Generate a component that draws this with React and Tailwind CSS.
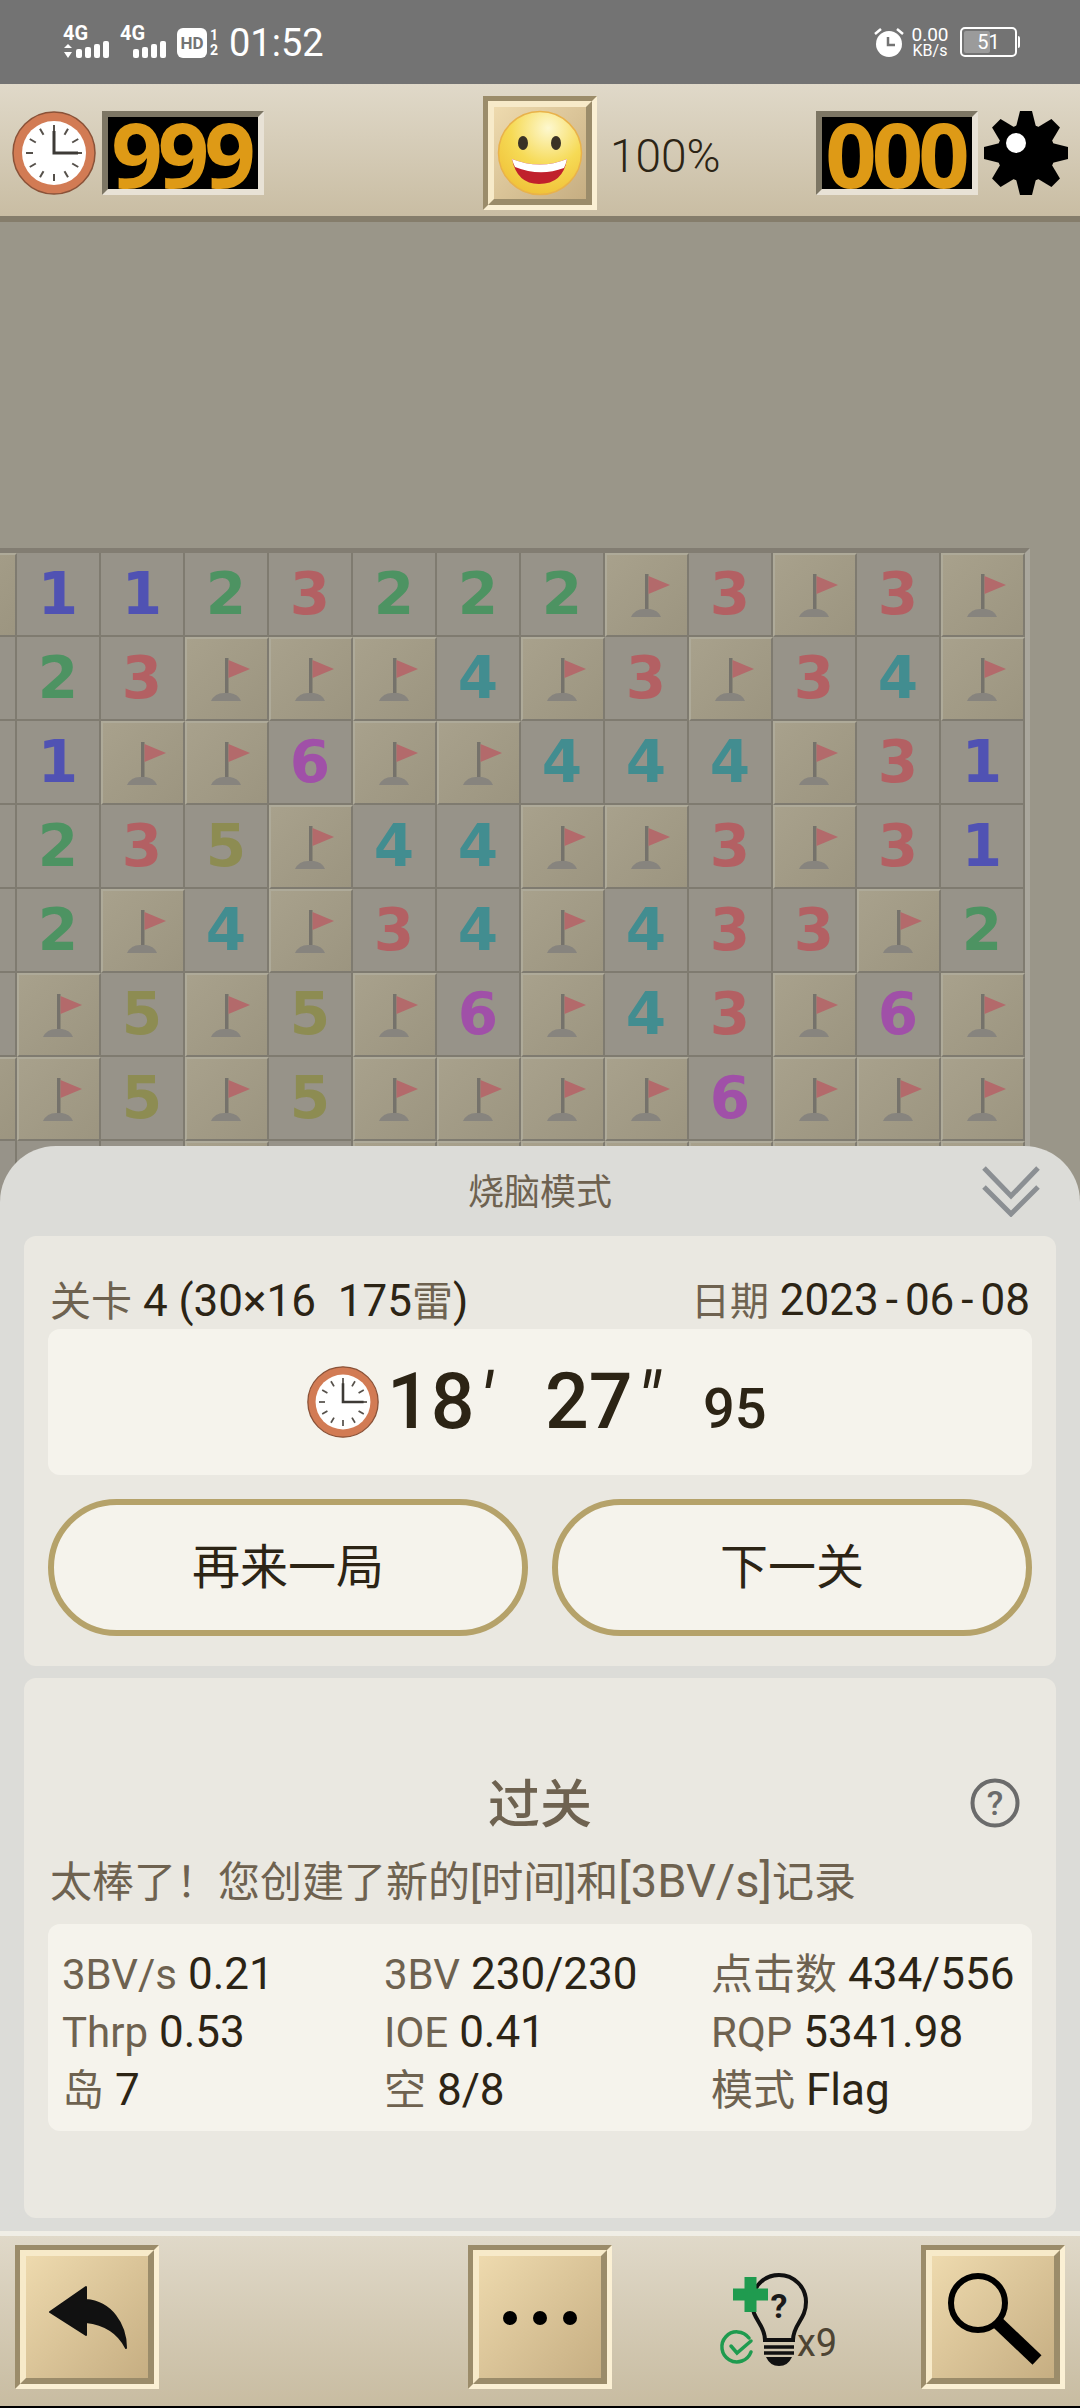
const board = [
  "F1123222F3F3F",
  ".23FFF4F3F34F",
  ".1FF6FF444F31",
  ".235F44FF3F31",
  ".2F4F34F433F2",
  ".F5F5F6F43F6F",
  "FF5F5FFFF6FFF",
  "...F.FFFFFFFF",
];

const digitColors = {
  1: "text-[#5052b3]",
  2: "text-[#4d9362]",
  3: "text-[#b36063]",
  4: "text-[#428d90]",
  5: "text-[#8d8c52]",
  6: "text-[#a050a8]",
};

const stats = [
  ["3BV/s", "0.21"],
  ["3BV", "230/230"],
  ["点击数", "434/556"],
  ["Thrp", "0.53"],
  ["IOE", "0.41"],
  ["RQP", "5341.98"],
  ["岛", "7"],
  ["空", "8/8"],
  ["模式", "Flag"],
];

function Signal({ arrows }) {
  const bars = [
    [13, 8, 9],
    [22, 6, 11],
    [31, 3, 14],
    [40, 0, 17],
  ];
  return (
    <div className="w-[48px] shrink-0 flex flex-col">
      <span className="h-[15px] text-[20px] leading-[15px] font-bold">4G</span>
      <svg width="48" height="17" viewBox="0 0 48 17">
        {arrows && <path d="M1 7 L5 3 L9 7 Z M1 11 L9 11 L5 17 Z" fill="#fff" />}
        {bars.map(([bx, by, h]) => (
          <rect key={bx} x={bx} y={by} width="6" height={h} rx="2" fill="#fff" />
        ))}
      </svg>
    </div>
  );
}

function Clock({ size }) {
  const ticks = [0, 30, 60, 90, 120, 150, 180, 210, 240, 270, 300, 330];
  return (
    <svg width={size} height={size} viewBox="0 0 84 84" className="shrink-0">
      <circle cx="42" cy="42" r="41" fill="#d27b54" stroke="#8a5238" strokeWidth="1.5" />
      <circle cx="42" cy="42" r="32" fill="#fff" />
      {ticks.map((a) => (
        <line key={a} x1="42" y1="14" x2="42" y2="21" stroke="#55504a" strokeWidth="2" transform={`rotate(${a} 42 42)`} />
      ))}
      <path d="M42 20 L42 42 L66 42" fill="none" stroke="#3d3a36" strokeWidth="3" />
    </svg>
  );
}

function Counter({ value }) {
  return (
    <div className="w-[162px] h-[84px] shrink-0 border-[6px] border-t-[#7d7664] border-l-[#7d7664] border-b-[#e8e2d6] border-r-[#e8e2d6] bg-black flex items-center justify-center">
      <span className="text-[90px] leading-[72px] font-bold tracking-[-5px] text-[#de9a16] font-['Open_Sans',sans-serif] pr-[4px]">
        {value}
      </span>
    </div>
  );
}

function Bevel({ className, children }) {
  return (
    <div className={`shrink-0 border-[5px] border-t-[#9b8c6a] border-l-[#9b8c6a] border-b-[#fbf0d4] border-r-[#fbf0d4] ${className}`}>
      <div className="w-full h-full border-[6px] border-t-[#f7eac9] border-l-[#f7eac9] border-b-[#9b8c6a] border-r-[#9b8c6a] bg-linear-to-br from-[#eedaae] to-[#c6ae82] flex items-center justify-center">
        {children}
      </div>
    </div>
  );
}

function Smiley() {
  return (
    <svg width="86" height="86" viewBox="0 0 86 86">
      <defs>
        <radialGradient id="face" cx="0.6" cy="0.2" r="0.9">
          <stop offset="0" stopColor="#fdf8cf" />
          <stop offset="0.5" stopColor="#f6da55" />
          <stop offset="1" stopColor="#efbd33" />
        </radialGradient>
      </defs>
      <circle cx="43" cy="43" r="41.5" fill="url(#face)" stroke="#e9b24a" strokeWidth="1.5" />
      <ellipse cx="26" cy="33" rx="5" ry="7" fill="#3a3226" />
      <ellipse cx="59" cy="33" rx="5" ry="7" fill="#3a3226" />
      <path d="M15 49 Q43 60 70 49 Q66 74 42 74 Q20 74 15 49 Z" fill="#c0202c" />
      <path d="M15 49 Q43 60 70 49 Q69 54 67 58 Q43 67 18 57 Q16 53 15 49 Z" fill="#fff" />
    </svg>
  );
}

function Gear() {
  const teeth = [0, 45, 90, 135, 180, 225, 270, 315];
  return (
    <svg width="84" height="84" viewBox="-42 -42 84 84" className="shrink-0">
      <circle r="29" fill="#000" />
      {teeth.map((a) => (
        <polygon key={a} points="-10,-26 -6,-42 6,-42 10,-26" fill="#000" transform={`rotate(${a})`} />
      ))}
      <circle cx="-10" cy="-10" r="10" fill="#fff" />
    </svg>
  );
}

function Flag() {
  return (
    <svg width="80" height="80" viewBox="2 2 80 80" className="shrink-0">
      <rect x="40" y="21" width="3.5" height="36" fill="#75726b" />
      <path d="M43.5 23 L65 32 L43.5 41 Z" fill="#b36a6b" />
      <path d="M26 64 Q30 56 39 56 L45 56 Q53 57 56 64 Z" fill="#87847e" />
    </svg>
  );
}

function Cell({ v }) {
  if (v === "F") {
    return (
      <div className="border-2 border-r-[#7f7b70] border-b-[#7f7b70] border-t-[#aeaa99] border-l-[#aeaa99] bg-linear-to-br from-[#a8a18c] to-[#9c9580] flex items-center justify-center overflow-hidden">
        <Flag />
      </div>
    );
  }
  return (
    <div className="border-r-2 border-b-2 border-[#7f7b70] bg-[#979389] flex items-center justify-center">
      {v !== "." && (
        <span className={`font-['DejaVu_Sans',sans-serif] font-bold text-[58px] leading-none ${digitColors[v]}`}>{v}</span>
      )}
    </div>
  );
}

function Board() {
  return (
    <div className="w-max ml-[-67px] border-t-[5px] border-r-[5px] border-t-[#827d72] border-r-[#aaa79d] grid grid-cols-[repeat(13,84px)] auto-rows-[84px]">
      {board.map((row, r) => row.split("").map((v, c) => <Cell key={r + "-" + c} v={v} />))}
    </div>
  );
}

function Hint() {
  return (
    <div className="ml-[108px] mt-[27px] flex items-end h-[94px]">
      <svg width="78" height="94" viewBox="0 0 78 94" className="shrink-0 overflow-visible">
        <path d="M45 68 C45 52 32 48 32 30 A27 27 0 1 1 86 30 C86 48 73 52 73 68 Z" fill="none" stroke="#111" strokeWidth="4" />
        <text x="59" y="46" textAnchor="middle" fontSize="34" fontWeight="700" fill="#1a1a1a" fontFamily="Roboto, sans-serif">?</text>
        <path d="M44 75 H74 M44 81 H74" stroke="#111" strokeWidth="3.5" />
        <path d="M46 85 H72 Q68 94 59 94 Q50 94 46 85 Z" fill="#111" />
        <path d="M24.5 5 H36.5 V16.5 H48 V28.5 H36.5 V40 H24.5 V28.5 H13 V16.5 H24.5 Z" fill="#1f9b4f" />
        <path d="M31 80 A15 15 0 1 1 29 66" fill="none" stroke="#1f9b4f" strokeWidth="3.5" strokeLinecap="round" />
        <path d="M11 74 L17 81 L31 69" fill="none" stroke="#1f9b4f" strokeWidth="3.5" strokeLinecap="round" />
      </svg>
      <span className="text-[38px] leading-none text-[#4d4433] pb-[4px] -ml-[1px]">x9</span>
    </div>
  );
}

export default function App() {
  return (
    <div className="relative w-[1080px] h-[2408px] overflow-hidden flex flex-col font-[Roboto,'Noto_Sans_CJK_SC',sans-serif]">
      {/* status bar */}
      <div className="h-[84px] shrink-0 bg-[#737373] flex items-center pl-[63px] pr-[60px] text-white">
        <Signal arrows />
        <div className="ml-[9px]">
          <Signal />
        </div>
        <div className="ml-[9px] w-[30px] h-[30px] mt-[2px] rounded-[6px] bg-white text-[#737373] text-[17px] font-bold leading-none flex items-center justify-center">
          HD
        </div>
        <div className="ml-[1px] mt-[2px] w-[12px] text-[14px] font-bold leading-[15px] text-center">
          <div>1</div>
          <div>2</div>
        </div>
        <span className="ml-[9px] text-[38px] leading-none mt-[1px]">01:52</span>
        <div className="ml-auto flex items-center">
          <svg width="30" height="30" viewBox="0 0 30 30">
            <circle cx="15" cy="17" r="13" fill="#fff" />
            <path d="M14 10 V18 H21" fill="none" stroke="#737373" strokeWidth="2.5" />
            <path d="M1 7 L7 2 M29 7 L23 2" stroke="#fff" strokeWidth="2.5" />
          </svg>
          <div className="ml-[6px] w-[40px] flex flex-col items-center leading-none">
            <span className="text-[19px] leading-[17px]">0.00</span>
            <span className="text-[16px] leading-[15px]">KB/s</span>
          </div>
          <div className="ml-[10px] w-[57px] h-[30px] rounded-[5px] border-2 border-white p-[2px] relative">
            <div className="h-full w-[26px] bg-[#9b9b9b] rounded-[2px]" />
            <span className="absolute inset-0 flex items-center justify-center text-[20px] leading-none">51</span>
          </div>
          <div className="ml-[1px] w-[2px] h-[12px] bg-white rounded-r-sm" />
        </div>
      </div>

      {/* top bar */}
      <div className="h-[138px] shrink-0 border-b-[6px] border-[#857d6b] bg-linear-to-b from-[#e0d9c9] to-[#c9bda3] flex items-center pt-[6px] pl-[12px] pr-[12px]">
        <Clock size={84} />
        <div className="ml-[6px]">
          <Counter value="999" />
        </div>
        <Bevel className="ml-[219px] w-[114px] h-[114px]">
          <Smiley />
        </Bevel>
        <span className="ml-[13px] mt-[6px] text-[46px] leading-none text-[#2c2415] font-light">100%</span>
        <div className="ml-auto">
          <Counter value="000" />
        </div>
        <div className="ml-[6px]">
          <Gear />
        </div>
      </div>

      {/* board + result sheet */}
      <div className="relative flex-1 bg-[#9a9689] overflow-hidden pt-[326px]">
        <Board />
        <div className="absolute inset-x-0 bottom-0 h-[1085px] bg-[#dcdcd8] rounded-t-[56px] flex flex-col px-[24px]">
          <div className="h-[90px] shrink-0 relative flex items-center justify-center">
            <span className="text-[36px] leading-none text-[#6e6250] mt-[4px]">烧脑模式</span>
            <svg width="60" height="52" viewBox="0 0 60 52" className="absolute right-[15px] top-[19px]">
              <path d="M3 3 L30 31 L57 3 M3 22 L30 49 L57 22" fill="none" stroke="#8b8f93" strokeWidth="5" />
            </svg>
          </div>

          <div className="h-[430px] shrink-0 rounded-[12px] bg-[#eae8e1] px-[24px]">
            <div className="pt-[37px] h-[93px] px-[2px] flex justify-between items-center text-[44px] leading-[48px] text-[#2c2415] whitespace-pre">
              <span>
                <span className="text-[41px] text-[#6e6250]">关卡</span> 4 (30×16  175<span className="text-[41px] text-[#6e6250]">雷</span>)
              </span>
              <span>
                <span className="text-[39px] text-[#6e6250]">日期</span> 2023<span className="px-[7px]">-</span>06<span className="px-[7px]">-</span>08
              </span>
            </div>
            <div className="h-[146px] rounded-[12px] bg-[#f5f3ec] flex items-center pl-[259px] text-[#2c2415]">
              <Clock size={72} />
              <span className="ml-[8px] w-[86px] shrink-0 text-[77px] leading-none font-medium">18</span>
              <span className="w-[72px] shrink-0 pl-[6px] text-[77px] leading-none italic">′</span>
              <span className="w-[86px] shrink-0 text-[77px] leading-none font-medium">27</span>
              <span className="w-[72px] shrink-0 pl-[5px] text-[77px] leading-none italic">″</span>
              <span className="mt-[14px] text-[56px] leading-none font-medium">95</span>
            </div>
            <div className="mt-[24px] grid grid-cols-2 gap-[24px]">
              <div className="h-[137px] rounded-full border-[6px] border-[#b5a26a] bg-[#f5f3ec] flex items-center justify-center text-[48px] text-[#2c2415]">
                再来一局
              </div>
              <div className="h-[137px] rounded-full border-[6px] border-[#b5a26a] bg-[#f5f3ec] flex items-center justify-center text-[48px] text-[#2c2415]">
                下一关
              </div>
            </div>
          </div>

          <div className="mt-[12px] h-[540px] shrink-0 rounded-[12px] bg-[#eae8e1] px-[24px] pt-[95px]">
            <div className="h-[60px] grid grid-cols-[1fr_auto_1fr] items-center">
              <div />
              <span className="mt-[6px] text-[52px] leading-none font-medium text-[#6e6250]">过关</span>
              <svg width="50" height="50" viewBox="0 0 50 50" className="justify-self-end mr-[12px]">
                <circle cx="25" cy="25" r="22.5" fill="none" stroke="#6b6b6b" strokeWidth="4" />
                <text x="25" y="37" textAnchor="middle" fontSize="34" fontWeight="500" fill="#6b6b6b" fontFamily="Roboto, sans-serif">?</text>
              </svg>
            </div>
            <div className="mt-[20px] h-[56px] pl-[2px] text-[42px] leading-[56px] text-[#6e6250] whitespace-nowrap">
              太棒了！您创建了新的[时间]和<span className="text-[47px]">[3BV/s]</span>记录
            </div>
            <div className="mt-[15px] h-[207px] rounded-[12px] bg-[#f5f3ec] pl-[14px] pt-[21px] grid grid-cols-[322px_327px_1fr] auto-rows-[58px] items-center text-[44px] leading-none whitespace-nowrap">
              {stats.map(([k, v]) => (
                <div key={k} className="text-[#2c2415]">
                  <span className="text-[42px] text-[#6e6250]">{k}</span> {v}
                </div>
              ))}
            </div>
          </div>
        </div>
      </div>

      {/* bottom bar */}
      <div className="h-[177px] shrink-0 border-t-[5px] border-b-2 border-t-[#f0eee6] border-b-black bg-linear-to-b from-[#e0d9c9] to-[#c8bca1] flex items-start pt-[9px] pl-[15px] pr-[15px]">
        <Bevel className="w-[144px] h-[144px]">
          <svg width="122" height="122" viewBox="0 0 122 122" className="shrink-0">
            <path d="M24 56 L60 31 L60 44 C85 46 100 68 100 92 C92 76 78 68 60 66 L60 79 Z" fill="#111" stroke="#111" strokeWidth="2" strokeLinejoin="round" />
          </svg>
        </Bevel>
        <Bevel className="ml-[309px] w-[144px] h-[144px]">
          <svg width="122" height="122" viewBox="0 0 122 122" className="shrink-0">
            <circle cx="31" cy="62" r="7" fill="#000" />
            <circle cx="61" cy="62" r="7" fill="#000" />
            <circle cx="91" cy="62" r="7" fill="#000" />
          </svg>
        </Bevel>
        <Hint />
        <Bevel className="ml-auto w-[144px] h-[144px]">
          <svg width="122" height="122" viewBox="0 0 122 122" className="shrink-0">
            <circle cx="46" cy="47" r="27" fill="none" stroke="#000" strokeWidth="6" />
            <path d="M65 66 L105 104" stroke="#000" strokeWidth="13" />
          </svg>
        </Bevel>
      </div>
    </div>
  );
}
